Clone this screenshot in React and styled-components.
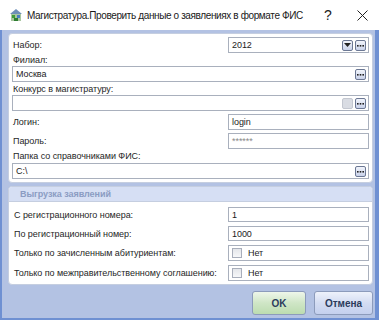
import React from "react";
import styled, { createGlobalStyle } from "styled-components";

const Global = createGlobalStyle`
  html, body { margin: 0; padding: 0; background: #ffffff; }
  body { font-family: "Liberation Sans", Arial, sans-serif; }
  * { box-sizing: border-box; }
`;

const Window = styled.div`
  width: 379px;
  height: 320px;
  display: flex;
  flex-direction: column;
  overflow: hidden;
`;

const TitleBar = styled.div`
  height: 30px;
  background: #ffffff;
  display: flex;
  align-items: center;
  padding: 0 0 0 9px;
  font-family: "Liberation Sans", Arial, sans-serif;
  font-size: 10px;
  letter-spacing: -0.38px;
  color: #1a1a1a;
`;

const TitleText = styled.span`
  margin-left: 4px;
  flex: 1;
  min-width: 0;
  white-space: nowrap;
`;

const TitleButton = styled.span`
  width: 34px;
  flex: none;
  display: flex;
  justify-content: center;
  align-items: center;
  font-size: 14px;
  letter-spacing: 0;
  color: #222;
`;

const Body = styled.div`
  flex: 1;
  background: #b3c2e3;
  border-left: 2px solid #6f90d2;
  border-right: 4px solid #6f90d2;
  border-bottom: 2px solid #6f90d2;
  padding: 3px 2px 0 6px;
  display: flex;
  flex-direction: column;
  gap: 3px;
`;

const panelText = `
  font-family: "Liberation Sans", Arial, sans-serif;
  font-size: 9px;
  letter-spacing: -0.05px;
  color: #262626;
`;

const Panel = styled.div`
  background: #ffffff;
  border: 1px solid #c5cee0;
  border-radius: 4px;
  padding: 3px;
  display: flex;
  flex-direction: column;
  ${panelText}
`;

const GroupPanel = styled.div`
  background: #ffffff;
  border: 1px solid #c5cee0;
  border-radius: 4px;
  overflow: hidden;
  display: flex;
  flex-direction: column;
  ${panelText}
`;

const GroupHeader = styled.div`
  height: 15px;
  background: #d6dff4;
  border-bottom: 1px solid #c5cee0;
  padding-left: 11px;
  display: flex;
  align-items: center;
  font-weight: bold;
  color: #8b9cc3;
`;

const GroupBody = styled.div`
  padding: 5px 3px 3px 4px;
  display: flex;
  flex-direction: column;
  gap: 4px;
`;

const Row = styled.div`
  display: grid;
  grid-template-columns: minmax(0, 1fr) 141px;
  align-items: center;
  margin-top: ${(p) => p.$mt || 0}px;
`;

const Label = styled.div`
  height: ${(p) => p.$h || 13}px;
  display: flex;
  align-items: center;
  white-space: nowrap;
  padding-left: 1px;
`;

const Field = styled.div`
  height: ${(p) => p.$h || 16}px;
  border: 1px solid #a9b0bd;
  background: #ffffff;
  display: flex;
  align-items: center;
  padding: 0 2px 0 3px;
  gap: 2px;
  color: ${(p) => (p.$muted ? "#8a8a8a" : "#1c1c1c")};
`;

const FieldText = styled.span`
  flex: 1;
  white-space: nowrap;
`;

const MiniButton = styled.span`
  width: 11px;
  height: 11px;
  border: 1px solid ${(p) => (p.$disabled ? "#c3c7d0" : "#6c7894")};
  border-radius: 2px;
  background: ${(p) =>
    p.$disabled ? "#d9dce3" : "linear-gradient(#f1f4fb, #c9d2ea)"};
  display: flex;
  align-items: center;
  justify-content: center;
`;

const Check = styled.span`
  width: 10px;
  height: 10px;
  border: 1px solid #a8aebb;
  background: linear-gradient(#e4e6ea, #f6f7f9);
  margin-right: 4px;
`;

const ButtonBar = styled.div`
  display: flex;
  justify-content: flex-end;
  gap: 8px;
  margin-top: 3px;
`;

const DialogButton = styled.button`
  height: 24px;
  width: ${(p) => p.$w}px;
  border: 1px solid #8c9bbb;
  border-radius: 3px;
  background: ${(p) =>
    p.$primary
      ? "linear-gradient(#eef6ea, #cfe6c6 50%, #bcdcb0)"
      : "linear-gradient(#eef2fb, #d3dcf2 50%, #c4d0ee)"};
  font-family: "Liberation Sans", Arial, sans-serif;
  font-size: 10px;
  font-weight: bold;
  color: #2b3b5c;
  padding: 0;
`;

const Dots = () => (
  <svg width="7" height="3" viewBox="0 0 7 3">
    <rect x="0" y="1" width="1.6" height="1.6" fill="#222" />
    <rect x="2.7" y="1" width="1.6" height="1.6" fill="#222" />
    <rect x="5.4" y="1" width="1.6" height="1.6" fill="#222" />
  </svg>
);

const Down = () => (
  <svg width="7" height="4" viewBox="0 0 7 4">
    <path d="M0 0 H7 L3.5 4 Z" fill="#222" />
  </svg>
);

const AppIcon = () => (
  <svg width="14" height="14" viewBox="0 0 14 14">
    <path d="M1 6 L7 1 L13 6 Z" fill="#6f8fb8" />
    <rect x="2" y="6" width="10" height="7" fill="#a9c6a0" />
    <rect x="3" y="7" width="3" height="3" fill="#3f9b3a" />
    <rect x="8" y="7" width="3" height="3" fill="#4a7fc4" />
    <rect x="5" y="10" width="4" height="3" fill="#2e7d32" />
  </svg>
);

const CloseIcon = () => (
  <svg width="11" height="11" viewBox="0 0 11 11">
    <path d="M0.5 0.5 L10.5 10.5 M10.5 0.5 L0.5 10.5" stroke="#222" strokeWidth="1" />
  </svg>
);

export default function App() {
  return (
    <>
      <Global />
      <Window>
        <TitleBar>
          <AppIcon />
          <TitleText>Магистратура.Проверить данные о заявлениях в формате ФИС</TitleText>
          <TitleButton>?</TitleButton>
          <TitleButton>
            <CloseIcon />
          </TitleButton>
        </TitleBar>
        <Body>
          <Panel>
            <Row>
              <Label $h={16}>Набор:</Label>
              <Field $h={16}>
                <FieldText>2012</FieldText>
                <MiniButton>
                  <Down />
                </MiniButton>
                <MiniButton>
                  <Dots />
                </MiniButton>
              </Field>
            </Row>
            <Label>Филиал:</Label>
            <Field>
              <FieldText>Москва</FieldText>
              <MiniButton>
                <Dots />
              </MiniButton>
            </Field>
            <Label>Конкурс в магистратуру:</Label>
            <Field>
              <FieldText />
              <MiniButton $disabled />
              <MiniButton>
                <Dots />
              </MiniButton>
            </Field>
            <Row $mt={3}>
              <Label $h={16}>Логин:</Label>
              <Field>
                <FieldText>login</FieldText>
              </Field>
            </Row>
            <Row $mt={3}>
              <Label $h={16}>Пароль:</Label>
              <Field $muted>
                <FieldText>******</FieldText>
              </Field>
            </Row>
            <Label $h={14}>Папка со справочниками ФИС:</Label>
            <Field>
              <FieldText>C:\</FieldText>
              <MiniButton>
                <Dots />
              </MiniButton>
            </Field>
          </Panel>
          <GroupPanel>
            <GroupHeader>Выгрузка заявлений</GroupHeader>
            <GroupBody>
              <Row>
                <Label $h={15}>С регистрационного номера:</Label>
                <Field $h={15}>
                  <FieldText>1</FieldText>
                </Field>
              </Row>
              <Row>
                <Label $h={15}>По регистрационный номер:</Label>
                <Field $h={15}>
                  <FieldText>1000</FieldText>
                </Field>
              </Row>
              <Row>
                <Label $h={16}>Только по зачисленным абитуриентам:</Label>
                <Field $h={16}>
                  <Check />
                  <FieldText>Нет</FieldText>
                </Field>
              </Row>
              <Row>
                <Label $h={16}>Только по межправительственному соглашению:</Label>
                <Field $h={16}>
                  <Check />
                  <FieldText>Нет</FieldText>
                </Field>
              </Row>
            </GroupBody>
          </GroupPanel>
          <ButtonBar>
            <DialogButton $primary $w={54}>OK</DialogButton>
            <DialogButton $w={59}>Отмена</DialogButton>
          </ButtonBar>
        </Body>
      </Window>
    </>
  );
}
